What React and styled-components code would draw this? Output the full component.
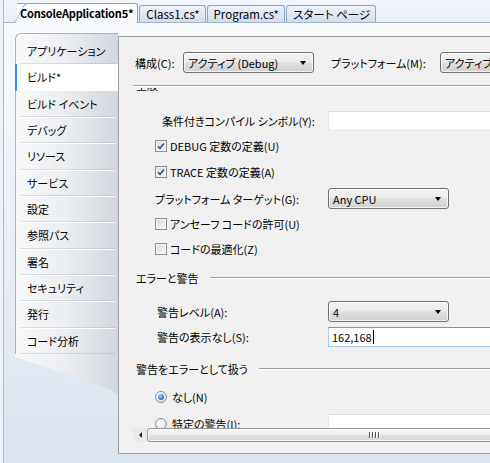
import React from 'react';
import styled, { createGlobalStyle } from 'styled-components';

const GlobalStyle = createGlobalStyle`
  html, body { margin: 0; padding: 0; }
  body {
    background: #eef2f8;
    font-family: "Noto Sans CJK JP", "Noto Sans", sans-serif;
    font-size: 11px;
    color: #000;
    font-feature-settings: "palt";
  }
`;

const Frame = styled.div`
  width: 490px;
  height: 463px;
  overflow: hidden;
  padding-left: 3px;
  box-sizing: border-box;
  background: #eef2f8;
`;

const Window = styled.div`
  height: 100%;
  border-left: 1px solid #a3b8d3;
  display: flex;
  flex-direction: column;
`;

const TabStrip = styled.div`
  height: 22px;
  flex: none;
  display: flex;
  align-items: flex-end;
  gap: 1px;
  padding-left: 13px;
  border-bottom: 1px solid #9fb4d0;
  background: linear-gradient(#f1f5fa, #e8eef6);
`;

const ActiveTab = styled.div`
  position: relative;
  z-index: 1;
  height: 19px;
  margin-bottom: -1px;
  padding: 0 4px 0 3px;
  border-top: 1px solid #8ea6c6;
  border-right: 1px solid #8ea6c6;
  border-top-right-radius: 3px;
  background: linear-gradient(#ffffff, #f6f8fb);
  font-weight: bold;
  font-size: 11px;
  letter-spacing: -0.2px;
  line-height: 19px;
  white-space: nowrap;
  &::before {
    content: '';
    position: absolute;
    top: -1px;
    bottom: 0;
    left: -3px;
    width: 14px;
    border-left: 1px solid #8ea6c6;
    border-top: 1px solid #8ea6c6;
    border-top-left-radius: 4px;
    background: linear-gradient(#ffffff, #f6f8fb);
    transform: skewX(-28deg);
    transform-origin: bottom left;
    z-index: -1;
  }
`;

const Tab = styled.div`
  height: 16px;
  padding: 0 5px 0 6px;
  border: 1px solid #8ea6c6;
  border-bottom: none;
  border-radius: 3px 3px 0 0;
  background: linear-gradient(#eef3fa, #d2ddeb);
  font-size: 11.5px;
  line-height: 16px;
  white-space: nowrap;
`;

const DocArea = styled.div`
  flex: 1;
  display: flex;
  align-items: flex-start;
  padding: 10px 0 0 11px;
  background: linear-gradient(#f7f9fc, #dae3ee);
  min-height: 0;
`;

const Nav = styled.div`
  width: 103px;
  flex: none;
  display: flex;
  flex-direction: column;
`;

const NavList = styled.div`
  border-left: 1px solid #aab4c0;
  border-top: 1px solid #aab4c0;
  border-top-left-radius: 6px;
  padding-top: 4px;
  background: linear-gradient(to right, #f9f9fa 0%, #eceef1 45%, #d2d7de 100%);
`;

const NavItem = styled.div`
  position: relative;
  height: 26.33px;
  box-sizing: border-box;
  display: flex;
  align-items: center;
  padding-left: ${p => (p.$selected ? 10 : 11)}px;
  margin-left: ${p => (p.$selected ? -1 : 0)}px;
  border-left: ${p => (p.$selected ? '2px solid #3d8ddd' : 'none')};
  background: ${p => (p.$selected ? '#ffffff' : 'transparent')};
  white-space: nowrap;
  &::after {
    content: '';
    position: absolute;
    left: 4px;
    right: 3px;
    bottom: -1px;
    height: 0;
    border-top: 1px solid rgba(120, 130, 145, 0.2);
    border-bottom: 1px solid rgba(255, 255, 255, 0.9);
    display: ${p => (p.$selected ? 'none' : 'block')};
  }
`;

const NavTail = styled.div`
  height: 42px;
  background: linear-gradient(to right, #f9f9fa 0%, #eceef1 45%, #d2d7de 100%);
  clip-path: polygon(0 0, 100% 0, 100% 100%, 94% 36px, 0 3px);
`;

const Content = styled.div`
  flex: none;
  width: 400px;
  height: 418px;
  margin-top: 3px;
  box-sizing: border-box;
  border: 1px solid #a0a0a0;
  border-right: none;
  background: #f0f0f0;
  display: flex;
  flex-direction: column;
`;

const ConfigRow = styled.div`
  display: flex;
  align-items: center;
  padding: 15px 0 0 16px;
  flex: none;
`;

const Label = styled.span`
  flex: none;
  box-sizing: border-box;
  width: ${p => (p.$w ? `${p.$w}px` : 'auto')};
  padding-left: ${p => p.$pl || 0}px;
  white-space: nowrap;
`;

const Combo = styled.div`
  position: relative;
  flex: none;
  width: ${p => p.$w}px;
  height: 21px;
  box-sizing: border-box;
  border: 1px solid #707070;
  border-radius: 3px;
  background: linear-gradient(#f3f3f3 0%, #ebebeb 48%, #dedede 52%, #d2d2d2 100%);
  box-shadow: inset 0 0 0 1px rgba(255, 255, 255, 0.7);
  display: flex;
  align-items: center;
  padding-left: 4px;
  white-space: nowrap;
  overflow: hidden;
  &::after {
    content: '';
    position: absolute;
    right: 7px;
    top: 8px;
    border-left: 3.5px solid transparent;
    border-right: 3.5px solid transparent;
    border-top: 4px solid #000;
  }
`;

const Separator = styled.div`
  flex: none;
  margin: 12px 0 0 14px;
  border-top: 1px solid #a0a0a0;
  border-bottom: 1px solid #ffffff;
`;

const ScrollView = styled.div`
  flex: none;
  height: 340px;
  margin: 1px 0 0 14px;
  overflow: hidden;
  display: flex;
  flex-direction: column;
`;

const Row = styled.div`
  flex: none;
  height: 20px;
  margin-top: ${p => p.$mt}px;
  display: grid;
  grid-template-columns: 195px 1fr;
  align-items: center;
`;

const RowLabel = styled.div`
  display: flex;
  align-items: center;
  padding-left: ${p => p.$pl}px;
  white-space: nowrap;
`;

const GroupHeader = styled.div`
  flex: none;
  height: 20px;
  margin-top: ${p => p.$mt}px;
  display: flex;
  align-items: center;
  gap: 11px;
  padding-left: 3px;
  white-space: nowrap;
`;

const HeaderLine = styled.div`
  flex: 1;
  border-top: 1px solid #a0a0a0;
  border-bottom: 1px solid #ffffff;
`;

const Check = styled.span`
  flex: none;
  width: 12px;
  height: 12px;
  box-sizing: border-box;
  margin-right: 3px;
  border: 1px solid #8e8f8f;
  background: linear-gradient(135deg, #d4d6d9, #f8f8f8);
  box-shadow: inset 0 0 0 1px #f4f4f4;
  display: inline-flex;
  align-items: center;
  justify-content: center;
`;

const Radio = styled.span`
  flex: none;
  width: 12px;
  height: 12px;
  box-sizing: border-box;
  margin-right: 5px;
  border: 1px solid #8e8f8f;
  border-radius: 50%;
  background: radial-gradient(circle at 40% 35%, #ffffff, #d6d8db);
  display: inline-flex;
  align-items: center;
  justify-content: center;
  &::after {
    content: '';
    display: ${p => (p.$on ? 'block' : 'none')};
    width: 6px;
    height: 6px;
    border-radius: 50%;
    background: radial-gradient(circle at 40% 35%, #a8dcfb, #1f6dc0 70%, #164f98);
  }
`;

const TextBox = styled.div`
  width: 200px;
  height: 20px;
  box-sizing: border-box;
  border: 1px solid;
  border-color: ${p => (p.$focus ? '#569de5 #a8cbee #a8cbee #a8cbee' : '#dcdcdc #e6e6e6 #e6e6e6 #e6e6e6')};
  background: #ffffff;
  display: flex;
  align-items: center;
  padding-left: 3px;
  align-self: ${p => (p.$top ? 'start' : 'center')};
`;

const Caret = styled.span`
  display: inline-block;
  width: 1px;
  height: 14px;
  margin-left: 1px;
  background: #000;
`;

const ScrollBar = styled.div`
  flex: none;
  height: 14px;
  margin-left: 14px;
  display: flex;
  background: #eaeaea;
`;

const ArrowButton = styled.div`
  flex: none;
  width: 14px;
  height: 14px;
  display: flex;
  align-items: center;
  justify-content: center;
  &::before {
    content: '';
    border-top: 3px solid transparent;
    border-bottom: 3px solid transparent;
    border-right: 3px solid #222;
  }
`;

const Thumb = styled.div`
  flex: none;
  width: 454px;
  height: 14px;
  box-sizing: border-box;
  border: 1px solid #979797;
  border-radius: 3px;
  background: linear-gradient(#f6f6f6 0%, #ececec 48%, #dedede 52%, #d7d7d7 100%);
  box-shadow: inset 0 0 0 1px rgba(255, 255, 255, 0.7);
  display: flex;
  align-items: center;
  justify-content: center;
  gap: 1px;
`;

const Grip = styled.span`
  width: 1px;
  height: 6px;
  background: #555;
  box-shadow: 1px 0 0 #fff;
  margin-right: 1px;
`;

const CheckMark = () => (
  <svg width="8" height="8" viewBox="0 0 8 8">
    <path d="M1 4.2 L3 6.3 L7 1.5" fill="none" stroke="#304f8c" strokeWidth="1.5" />
  </svg>
);

const navItems = [
  'アプリケーション',
  'ビルド*',
  'ビルド イベント',
  'デバッグ',
  'リソース',
  'サービス',
  '設定',
  '参照パス',
  '署名',
  'セキュリティ',
  '発行',
  'コード分析',
];

export default function App() {
  return (
    <>
      <GlobalStyle />
      <Frame>
        <Window>
          <TabStrip>
            <ActiveTab>ConsoleApplication5*</ActiveTab>
            <Tab>Class1.cs*</Tab>
            <Tab>Program.cs*</Tab>
            <Tab>スタート ページ</Tab>
          </TabStrip>
          <DocArea>
            <Nav>
              <NavList>
                {navItems.map((n, i) => (
                  <NavItem key={n} $selected={i === 1}>
                    {n}
                  </NavItem>
                ))}
              </NavList>
              <NavTail />
            </Nav>
            <Content>
              <ConfigRow>
                <Label $w={48}>構成(C):</Label>
                <Combo $w={131}>アクティブ (Debug)</Combo>
                <Label $w={126} $pl={17}>
                  プラットフォーム(M):
                </Label>
                <Combo $w={131}>アクティブ (Any CPU)</Combo>
              </ConfigRow>
              <Separator />
              <ScrollView>
                <GroupHeader $mt={-13}>全般</GroupHeader>
                <Row $mt={16}>
                  <RowLabel $pl={29}>条件付きコンパイル シンボル(Y):</RowLabel>
                  <TextBox />
                </Row>
                <Row $mt={5}>
                  <RowLabel $pl={22}>
                    <Check>
                      <CheckMark />
                    </Check>
                    DEBUG 定数の定義(U)
                  </RowLabel>
                </Row>
                <Row $mt={6}>
                  <RowLabel $pl={22}>
                    <Check>
                      <CheckMark />
                    </Check>
                    TRACE 定数の定義(A)
                  </RowLabel>
                </Row>
                <Row $mt={6}>
                  <RowLabel $pl={22}>プラットフォーム ターゲット(G):</RowLabel>
                  <Combo $w={121}>Any CPU</Combo>
                </Row>
                <Row $mt={6}>
                  <RowLabel $pl={22}>
                    <Check />
                    アンセーフ コードの許可(U)
                  </RowLabel>
                </Row>
                <Row $mt={5}>
                  <RowLabel $pl={22}>
                    <Check />
                    コードの最適化(Z)
                  </RowLabel>
                </Row>
                <GroupHeader $mt={9}>
                  エラーと警告
                  <HeaderLine />
                </GroupHeader>
                <Row $mt={13}>
                  <RowLabel $pl={24}>警告レベル(A):</RowLabel>
                  <Combo $w={121}>4</Combo>
                </Row>
                <Row $mt={6}>
                  <RowLabel $pl={24}>警告の表示なし(S):</RowLabel>
                  <TextBox $focus>
                    162,168
                    <Caret />
                  </TextBox>
                </Row>
                <GroupHeader $mt={12}>
                  警告をエラーとして扱う
                  <HeaderLine />
                </GroupHeader>
                <Row $mt={8}>
                  <RowLabel $pl={22}>
                    <Radio $on />
                    なし(N)
                  </RowLabel>
                </Row>
                <Row $mt={7}>
                  <RowLabel $pl={22}>
                    <Radio />
                    特定の警告(I):
                  </RowLabel>
                  <TextBox $top />
                </Row>
              </ScrollView>
              <ScrollBar>
                <ArrowButton />
                <Thumb>
                  <Grip />
                  <Grip />
                  <Grip />
                  <Grip />
                </Thumb>
              </ScrollBar>
            </Content>
          </DocArea>
        </Window>
      </Frame>
    </>
  );
}
